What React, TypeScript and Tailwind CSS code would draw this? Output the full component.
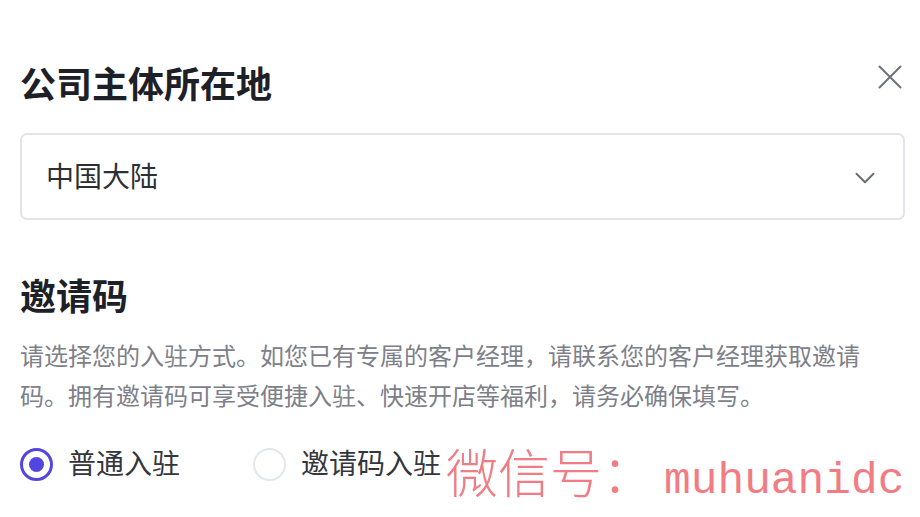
import { ChevronDown } from "lucide-react";

const cjk = "font-['Inter','Noto_Sans_CJK_SC',sans-serif]";

function Radio({ checked, label }: { checked?: boolean; label: string }) {
  return (
    <label className="flex items-center gap-[15px]">
      {checked ? (
        <span className="flex h-[33px] w-[33px] items-center justify-center rounded-full border-[3px] border-[#5246e0]">
          <span className="h-[15px] w-[15px] rounded-full bg-[#5246e0]" />
        </span>
      ) : (
        <span className="h-[33px] w-[33px] rounded-full border-2 border-[#e4e6ee]" />
      )}
      <span className="text-[28px] leading-[34px] text-[#33363d]">{label}</span>
    </label>
  );
}

export default function App() {
  return (
    <div className={`relative h-[517px] w-[920px] overflow-hidden bg-white pl-5 pr-[15px] ${cjk}`}>
      <div className="mt-[63px] flex h-[44px] items-start justify-between">
        <h2 className="text-[36px] font-bold leading-[44px] text-[#1e2028]">公司主体所在地</h2>
        <button className="mr-[3px] mt-[2px] text-[#6e717a]">
          <svg width="24" height="24" viewBox="0 0 24 24" fill="none" stroke="currentColor" strokeWidth="2" strokeLinecap="round">
            <path d="M1.5 1.5 22.5 22.5M22.5 1.5 1.5 22.5" />
          </svg>
        </button>
      </div>

      <div className="mt-[26px] flex h-[87px] items-center justify-between rounded-[7px] border-2 border-[#e2e4ea] pl-[24px] pr-[21px]">
        <span className="text-[28px] text-[#2c2f36]">中国大陆</span>
        <ChevronDown className="mt-[2px] h-[34px] w-[34px] text-[#6a6d76]" strokeWidth={1.4} />
      </div>

      <h2 className="mt-[55px] h-[44px] text-[36px] font-bold leading-[44px] text-[#1e2028]">邀请码</h2>

      <p className="mt-[18px] max-w-[872px] text-[24px] leading-[40px] text-[#7d8089]">
        请选择您的入驻方式。如您已有专属的客户经理，请联系您的客户经理获取邀请码。拥有邀请码可享受便捷入驻、快速开店等福利，请务必确保填写。
      </p>

      <div className="mt-[30px] flex items-center gap-[73px]">
        <Radio checked label="普通入驻" />
        <Radio label="邀请码入驻" />
      </div>

      <div className="absolute left-[446px] top-[446px] flex items-baseline text-[#f27c84]">
        <span className="font-['Liberation_Serif','Noto_Sans_CJK_SC',serif] text-[52px] font-light leading-[60px]">微信号：</span>
        <span className="ml-[10px] font-['Liberation_Mono',monospace] text-[44.5px] leading-[60px]">muhuanidc</span>
      </div>
    </div>
  );
}
